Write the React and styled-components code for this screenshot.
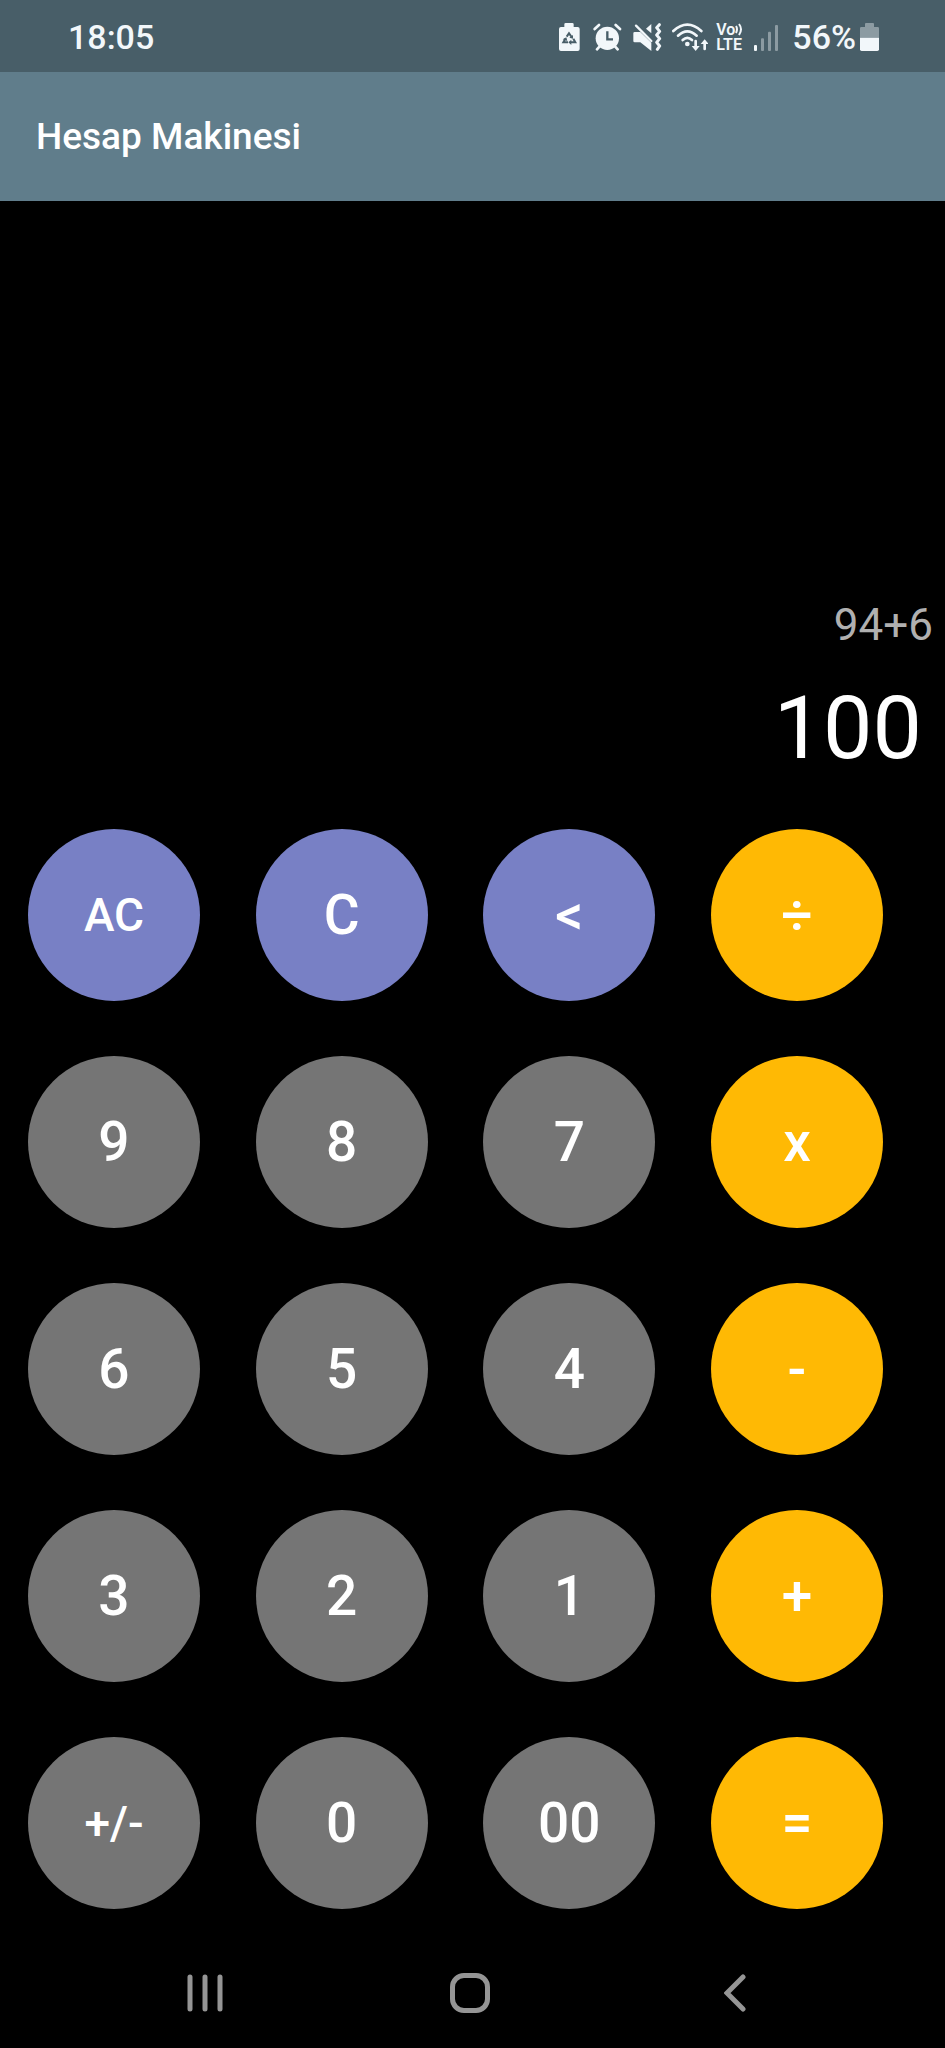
import React from "react";
import styled, { createGlobalStyle } from "styled-components";

const GlobalStyle = createGlobalStyle`
  * { box-sizing: border-box; }
  body {
    margin: 0;
    background: #000;
    font-family: Roboto, "Liberation Sans", sans-serif;
  }
`;

const Screen = styled.div`
  display: flex;
  flex-direction: column;
  min-height: 100vh;
  background: #000;
  color: #fff;
`;

const StatusBar = styled.header`
  display: flex;
  align-items: center;
  justify-content: space-between;
  height: 72px;
  padding: 2px 66px 0 68px;
  background: #485e68;
  color: #f2f7fa;
`;

const StatusText = styled.span`
  font-size: 34px;
  font-weight: 500;
  line-height: 40px;
`;

const StatusIcons = styled.div`
  display: flex;
  align-items: center;
  gap: 8px;
`;

const BatteryGroup = styled.div`
  display: flex;
  align-items: center;
  gap: 4px;
`;

const Glyph = styled.svg`
  display: block;
  flex: none;
`;

const Volte = styled.div`
  display: flex;
  flex-direction: column;
  width: 30px;
  font-size: 16px;
  font-weight: 600;
  line-height: 15px;
  white-space: nowrap;
`;

const VolteTop = styled.span`
  display: flex;
  align-items: center;
`;

const AppBar = styled.div`
  display: flex;
  align-items: center;
  height: 129px;
  padding: 0 36px;
  background: #607d8b;
`;

const Title = styled.h1`
  margin: 0;
  font-size: 37px;
  font-weight: 500;
  line-height: 44px;
`;

const Display = styled.main`
  flex: 1;
  display: flex;
  flex-direction: column;
  justify-content: flex-end;
  align-items: flex-end;
  padding-bottom: 48px;
`;

const Expression = styled.div`
  padding: 0 12px;
  color: #b0b0b0;
  font-size: 44px;
  line-height: 52px;
`;

const Result = styled.output`
  padding: 24px 23px 0;
  font-size: 88px;
  line-height: 106px;
`;

const Keypad = styled.section`
  display: grid;
  grid-template-columns: repeat(4, 172px);
  justify-content: space-between;
  row-gap: 55px;
  padding: 0 62px 29px 28px;
`;

const tones = {
  action: "#7880c5",
  digit: "#757575",
  operator: "#ffb904",
};

const Key = styled.button`
  height: 172px;
  padding: 0;
  border: 0;
  border-radius: 50%;
  background: ${(p) => tones[p.$tone]};
  color: #fff;
  font-family: inherit;
  font-size: ${(p) => (p.$small ? 46 : 55)}px;
  font-weight: 500;
  line-height: 66px;
  cursor: pointer;
`;

const NavBar = styled.nav`
  display: grid;
  grid-template-columns: repeat(3, 1fr);
  height: 110px;
  padding: 0 78px 0 72px;
`;

const NavButton = styled.button`
  display: flex;
  align-items: center;
  justify-content: center;
  padding: 0;
  border: 0;
  background: none;
  color: #959595;
  cursor: pointer;
`;

const keys = [
  { label: "AC", tone: "action", small: true },
  { label: "C", tone: "action" },
  { label: "<", tone: "action" },
  { label: "÷", tone: "operator" },
  { label: "9", tone: "digit" },
  { label: "8", tone: "digit" },
  { label: "7", tone: "digit" },
  { label: "x", tone: "operator" },
  { label: "6", tone: "digit" },
  { label: "5", tone: "digit" },
  { label: "4", tone: "digit" },
  { label: "-", tone: "operator" },
  { label: "3", tone: "digit" },
  { label: "2", tone: "digit" },
  { label: "1", tone: "digit" },
  { label: "+", tone: "operator" },
  { label: "+/-", tone: "digit", small: true },
  { label: "0", tone: "digit" },
  { label: "00", tone: "digit" },
  { label: "=", tone: "operator" },
];

const BatterySaverIcon = () => (
  <Glyph width="26" height="28" viewBox="0 0 78 84" fill="currentColor" aria-hidden="true">
    <path d="M20 0h20q4 0 4 4v8h12q6 0 6 6v60q0 6-6 6H6q-6 0-6-6V18q0-6 6-6h10V4q0-4 4-4z" />
    <g fill="none" stroke="#485e68" strokeWidth="6">
      <path d="M23 41l7-10 8 11" />
      <path d="M43 47l6 11H35" />
      <path d="M27 58H13l6-11" />
    </g>
    <g fill="#485e68">
      <path d="M42 36v11l-11-3z" />
      <path d="M37 50v16l-9-8z" />
      <path d="M11 49l11-6 3 11z" />
    </g>
  </Glyph>
);

const AlarmIcon = () => (
  <Glyph width="32" height="28" viewBox="0 0 96 84" fill="currentColor" aria-hidden="true">
    <circle cx="43" cy="46" r="35" />
    <g fill="none" stroke="currentColor" strokeLinecap="round" strokeWidth="8">
      <path d="M5 18L18 6M81 18L68 6M20 70l-8 9M66 70l8 9" />
    </g>
    <path d="M43 25v24h17" fill="none" stroke="#485e68" strokeWidth="7" />
  </Glyph>
);

const MuteVibrateIcon = () => (
  <Glyph width="31" height="28" viewBox="0 0 93 84" fill="currentColor" aria-hidden="true">
    <path d="M5 27h17l33 32v25L22 58H5q-4 0-4-4V31q0-4 4-4z" />
    <path d="M55 3v28L39 17z" />
    <path d="M9 8l46 46" fill="none" stroke="currentColor" strokeWidth="7" strokeLinecap="round" />
    <path
      d="M79 5l-8 9 9 11-9 11 9 11-9 11 9 11-7 10"
      fill="none"
      stroke="currentColor"
      strokeWidth="9"
      strokeLinejoin="round"
      strokeLinecap="round"
    />
  </Glyph>
);

const WifiIcon = () => (
  <Glyph width="36" height="28" viewBox="0 0 108 84" fill="currentColor" aria-hidden="true">
    <g fill="none" stroke="currentColor" strokeWidth="8" strokeLinecap="round">
      <path d="M4 24Q46-14 88 24" />
      <path d="M18 38Q46 12 74 38" />
      <path d="M32 51Q46 38 60 51" />
      <path d="M71 54v20M98 78V58" />
    </g>
    <circle cx="46" cy="63" r="7" />
    <path d="M59 69h24L71 84z" />
    <path d="M86 63h24L98 49z" />
  </Glyph>
);

const VolteWaves = () => (
  <Glyph width="8" height="15" viewBox="0 0 8 15" fill="none" stroke="currentColor" strokeWidth="2" aria-hidden="true">
    <path d="M1 4q2 3 0 7M4 2q4 5 0 11" />
  </Glyph>
);

const SignalIcon = () => (
  <Glyph width="30" height="28" viewBox="0 0 90 84" fill="currentColor" aria-hidden="true">
    <rect x="0" y="66" width="9" height="18" rx="3" />
    <g opacity="0.4">
      <rect x="21" y="46" width="9" height="38" rx="3" />
      <rect x="42" y="26" width="9" height="58" rx="3" />
      <rect x="63" y="6" width="9" height="78" rx="3" />
    </g>
  </Glyph>
);

const BatteryIcon = () => (
  <Glyph width="19" height="28" viewBox="0 0 57 84" fill="currentColor" aria-hidden="true">
    <path d="M18 0h21q3 0 3 3v9h11q4 0 4 4v28H0V16q0-4 4-4h11V3q0-3 3-3z" opacity="0.4" />
    <path d="M0 44h57v35q0 5-5 5H5q-5 0-5-5z" />
  </Glyph>
);

const RecentsIcon = () => (
  <Glyph width="36" height="40" viewBox="0 0 36 40" stroke="currentColor" strokeWidth="5" strokeLinecap="round" aria-hidden="true">
    <path d="M3 4v32M18 4v32M33 4v32" />
  </Glyph>
);

const HomeIcon = () => (
  <Glyph width="40" height="40" viewBox="0 0 80 80" fill="none" stroke="currentColor" strokeWidth="10" aria-hidden="true">
    <rect x="5" y="5" width="70" height="70" rx="23" />
  </Glyph>
);

const BackIcon = () => (
  <Glyph width="22" height="40" viewBox="0 0 22 40" fill="none" stroke="currentColor" strokeWidth="5" strokeLinecap="round" aria-hidden="true">
    <path d="M19 4L3 20l16 16" />
  </Glyph>
);

export default function App() {
  return (
    <Screen>
      <GlobalStyle />
      <StatusBar>
        <StatusText>18:05</StatusText>
        <StatusIcons>
          <BatterySaverIcon />
          <AlarmIcon />
          <MuteVibrateIcon />
          <WifiIcon />
          <Volte>
            <VolteTop>
              Vo
              <VolteWaves />
            </VolteTop>
            <span>LTE</span>
          </Volte>
          <SignalIcon />
          <BatteryGroup>
            <StatusText>56%</StatusText>
            <BatteryIcon />
          </BatteryGroup>
        </StatusIcons>
      </StatusBar>
      <AppBar>
        <Title>Hesap Makinesi</Title>
      </AppBar>
      <Display>
        <Expression>94+6</Expression>
        <Result>100</Result>
      </Display>
      <Keypad aria-label="Hesap Makinesi">
        {keys.map((key) => (
          <Key key={key.label} type="button" $tone={key.tone} $small={key.small}>
            {key.label}
          </Key>
        ))}
      </Keypad>
      <NavBar>
        <NavButton type="button">
          <RecentsIcon />
        </NavButton>
        <NavButton type="button">
          <HomeIcon />
        </NavButton>
        <NavButton type="button">
          <BackIcon />
        </NavButton>
      </NavBar>
    </Screen>
  );
}
